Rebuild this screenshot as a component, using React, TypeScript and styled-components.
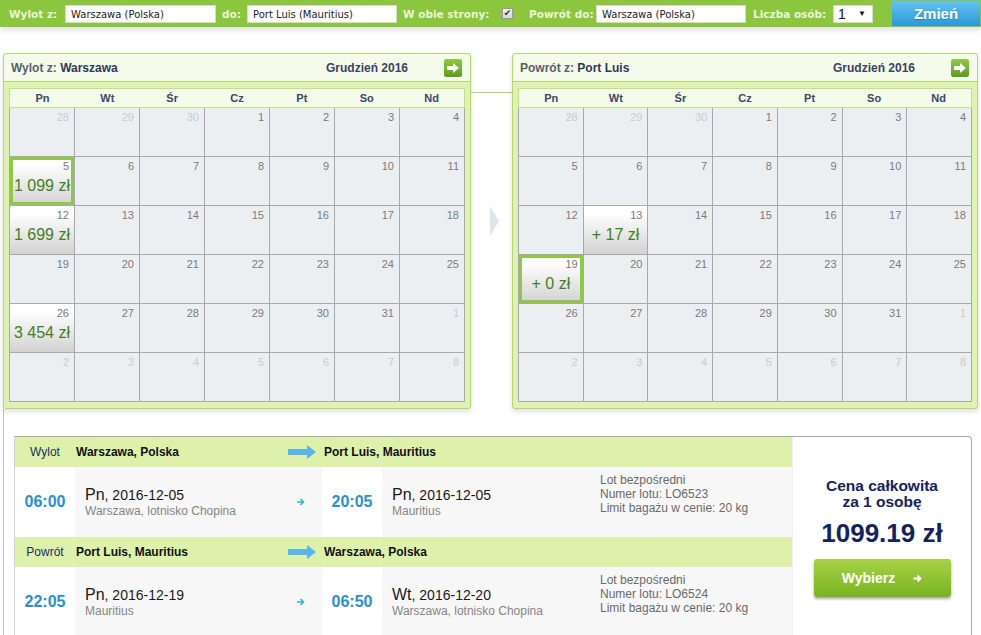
import * as React from 'react';
import styled, { createGlobalStyle } from 'styled-components';

const GlobalStyle = createGlobalStyle`
    body {
        margin: 0;
        background: #fff;
        font-family: "Liberation Sans", Arial, sans-serif;
    }
`;

const Page = styled.div`
    width: 981px;
    height: 635px;
    overflow: hidden;
`;

/* ---------- search bar ---------- */

const TopBar = styled.div`
    position: relative;
    z-index: 1;
    height: 27px;
    display: flex;
    align-items: center;
    background: #8cc63f;
    box-shadow: 0 3px 6px rgba(0, 0, 0, 0.13);
    font-family: "DejaVu Sans", Verdana, sans-serif;
`;

const BarLabel = styled.span<{ $w: number; $pl: number }>`
    box-sizing: border-box;
    width: ${p => p.$w}px;
    padding-left: ${p => p.$pl}px;
    color: #e9f5d6;
    font-weight: bold;
    font-size: 10.5px;
    white-space: nowrap;
`;

const BarInput = styled.div<{ $w: number }>`
    box-sizing: border-box;
    width: ${p => p.$w}px;
    height: 18px;
    padding-left: 5px;
    line-height: 17px;
    background: #fff;
    border: 1px solid #d5dccb;
    color: #222;
    font-size: 10px;
    white-space: nowrap;
`;

const Check = styled.span`
    box-sizing: border-box;
    width: 11px;
    height: 11px;
    border: 1px solid #9a9a9a;
    background: linear-gradient(#f4f4f4, #d6d6d6);
    display: flex;
    align-items: center;
    justify-content: center;
    color: #333;
    font-size: 9px;
    line-height: 9px;
`;

const Select = styled.div`
    box-sizing: border-box;
    width: 40px;
    height: 18px;
    padding: 0 6px 0 4px;
    display: flex;
    align-items: center;
    justify-content: space-between;
    background: #fff;
    border: 1px solid #d5dccb;
    font-family: "Liberation Sans", Arial, sans-serif;
    font-size: 14px;
    color: #111;
    span {
        font-size: 8px;
    }
`;

const ChangeButton = styled.div`
    margin-left: 19px;
    width: 88px;
    height: 25px;
    align-self: flex-start;
    margin-top: 1px;
    display: flex;
    align-items: center;
    justify-content: center;
    background: linear-gradient(#62c3f1, #2a98d5);
    color: #fff;
    font-family: "Liberation Sans", Arial, sans-serif;
    font-weight: bold;
    font-size: 15px;
    text-shadow: 0 1px 1px rgba(0, 0, 0, 0.2);
`;

/* ---------- calendars ---------- */

const CalendarRow = styled.div`
    display: flex;
    margin: 26px 0 0 3px;
`;

const CalPanel = styled.div<{ $w: number }>`
    box-sizing: border-box;
    width: ${p => p.$w}px;
    border: 1px solid #b5d770;
    border-radius: 3px;
    background: #dff2b3;
    box-shadow: 0 3px 5px rgba(0, 0, 0, 0.12);
`;

const CalHeader = styled.div`
    height: 27px;
    display: flex;
    align-items: center;
    padding: 0 8px 0 7px;
    background: #f5fbea;
    border-bottom: 1px solid #b5d770;
    border-radius: 3px 3px 0 0;
    font-size: 12px;
    font-weight: bold;
    color: #2f3856;
`;

const CalTitle = styled.div`
    flex: 1;
    span {
        color: #5a5f66;
    }
`;

const MonthTitle = styled.div`
    color: #39435f;
    margin-right: 36px;
`;

const NextButton = styled.div`
    width: 18px;
    height: 18px;
    border-radius: 2px;
    background: linear-gradient(#8fca45, #5f9b22);
    display: flex;
    align-items: center;
    justify-content: center;
`;

const CalBody = styled.div`
    padding: 6px 5px 6px 5px;
`;

const WeekHead = styled.div`
    display: grid;
    grid-template-columns: repeat(7, 1fr);
    height: 18px;
    border: 1px solid #c2e087;
    background: #f5fbe9;
    font-size: 11px;
    font-weight: bold;
    line-height: 18px;
    text-align: center;
    color: #3a4767;
`;

const DayGrid = styled.div`
    display: grid;
    grid-template-columns: repeat(7, 1fr);
    border-left: 1px solid #a9a9a9;
`;

const Cell = styled.div<{ $priced?: boolean; $selected?: boolean }>`
    height: 48px;
    border-right: 1px solid #a9a9a9;
    border-bottom: 1px solid #a9a9a9;
    background: ${p => (p.$priced ? 'linear-gradient(#ffffff 15%, #d2d2d2)' : '#eceff1')};
    box-shadow: ${p => (p.$selected ? 'inset 0 0 0 3px #91c746' : 'none')};
`;

const DayNum = styled.div<{ $other?: boolean }>`
    padding: 3px 5px 0 0;
    text-align: right;
    font-size: 11px;
    line-height: 13px;
    color: ${p => (p.$other ? '#c9cbcd' : '#7b7b7b')};
`;

const Price = styled.div`
    margin-top: 4px;
    text-align: center;
    font-size: 16px;
    line-height: 18px;
    color: #437f1e;
    white-space: nowrap;
`;

const Between = styled.div`
    width: 41px;
    padding-top: 39px;
`;

const Connector = styled.div`
    height: 1px;
    background: #b2d56d;
`;

const Chevron = styled.div`
    margin: 113px 0 0 19px;
`;

/* ---------- flight summary ---------- */

const FlightWrap = styled.div`
    margin-left: 3px;
    padding: 27px 0 0 10px;
    border-left: 1px solid #b3d370;
`;

const FlightPanel = styled.div`
    display: flex;
    width: 956px;
    height: 220px;
    border: 1px solid #a8a8a8;
    border-left-color: #d0d0d0;
    border-bottom: none;
    border-top-right-radius: 4px;
`;

const Legs = styled.div`
    width: 777px;
`;

const LegHead = styled.div`
    height: 30px;
    display: flex;
    align-items: center;
    background: #ddf1aa;
    font-size: 12px;
`;

const LegLabel = styled.div`
    width: 60px;
    text-align: center;
    color: #1d2b5a;
`;

const City = styled.div<{ $w?: number }>`
    width: ${p => (p.$w ? `${p.$w}px` : 'auto')};
    padding-left: 1px;
    font-weight: bold;
    color: #111;
`;

const BigArrow = styled.svg`
    margin-right: 7px;
`;

const LegDetail = styled.div`
    height: 70px;
    display: flex;
`;

const Time = styled.div`
    width: 60px;
    display: flex;
    align-items: center;
    justify-content: center;
    background: #fff;
    font-size: 16px;
    font-weight: bold;
    color: #2a8fd3;
`;

const Info = styled.div<{ $w?: number }>`
    box-sizing: border-box;
    width: ${p => (p.$w ? `${p.$w}px` : 'auto')};
    flex: ${p => (p.$w ? 'none' : '1')};
    padding-left: 10px;
    display: flex;
    align-items: center;
    background: #f7f7f7;
`;

const DateBlock = styled.div<{ $w?: number }>`
    width: ${p => (p.$w ? `${p.$w}px` : 'auto')};
    flex: ${p => (p.$w ? 'none' : '1')};
`;

const DateLine = styled.div`
    font-size: 14px;
    line-height: 17px;
    color: #1a1a1a;
    b {
        font-weight: normal;
        font-size: 16px;
    }
`;

const Place = styled.div`
    font-size: 12px;
    line-height: 15px;
    color: #858585;
`;

const SmallArrow = styled.svg`
    margin-right: 17px;
`;

const Meta = styled.div`
    align-self: flex-start;
    padding-top: 6px;
    font-size: 12px;
    line-height: 14px;
    color: #6a6a6a;
`;

const PriceBox = styled.div`
    flex: 1;
    display: flex;
    flex-direction: column;
    align-items: center;
    border-left: 1px solid #f0f0f0;
    color: #14235f;
    font-weight: bold;
`;

const PriceTitle = styled.div`
    margin-top: 41px;
    font-size: 15.5px;
    line-height: 16px;
    text-align: center;
`;

const Total = styled.div`
    margin-top: 8px;
    font-size: 26px;
    line-height: 30px;
`;

const ChooseButton = styled.div`
    margin-top: 11px;
    width: 137px;
    height: 38px;
    display: flex;
    align-items: center;
    justify-content: center;
    gap: 18px;
    border-radius: 3px;
    background: linear-gradient(#a7d245, #79b322);
    box-shadow: 0 2px 3px rgba(0, 0, 0, 0.35);
    color: #fff;
    font-size: 14px;
`;

type Day = { n: number; other?: boolean; price?: string; selected?: boolean };

function buildMonth(extra: Record<number, { price: string; selected?: boolean }>): Day[] {
    const days: Day[] = [28, 29, 30].map(n => ({ n, other: true }));
    for (let n = 1; n <= 31; n++) days.push({ n, ...extra[n] });
    for (let n = 1; n <= 8; n++) days.push({ n, other: true });
    return days;
}

const weekDays = ['Pn', 'Wt', 'Śr', 'Cz', 'Pt', 'So', 'Nd'];

const outbound = buildMonth({
    5: { price: '1 099 zł', selected: true },
    12: { price: '1 699 zł' },
    26: { price: '3 454 zł' },
});
const inbound = buildMonth({
    13: { price: '+ 17 zł' },
    19: { price: '+ 0 zł', selected: true },
});

const Calendar = ({ label, city, days, width }: { label: string; city: string; days: Day[]; width: number }) => (
    <CalPanel $w={width}>
        <CalHeader>
            <CalTitle><span>{label}</span> {city}</CalTitle>
            <MonthTitle>Grudzień 2016</MonthTitle>
            <NextButton>
                <svg width="12" height="10" viewBox="0 0 12 10">
                    <polygon points="0,3 6,3 6,0 12,5 6,10 6,7 0,7" fill="#fff" />
                </svg>
            </NextButton>
        </CalHeader>
        <CalBody>
            <WeekHead>
                {weekDays.map(d => <div key={d}>{d}</div>)}
            </WeekHead>
            <DayGrid>
                {days.map((d, i) => (
                    <Cell key={i} $priced={!!d.price} $selected={d.selected}>
                        <DayNum $other={d.other}>{d.n}</DayNum>
                        {d.price && <Price>{d.price}</Price>}
                    </Cell>
                ))}
            </DayGrid>
        </CalBody>
    </CalPanel>
);

const HeadArrow = () => (
    <BigArrow width="28" height="14" viewBox="0 0 28 14">
        <polygon points="0,4 19,4 19,0 28,7 19,14 19,10 0,10" fill="#5ab5e8" />
    </BigArrow>
);

const DetailArrow = () => (
    <SmallArrow width="8" height="8" viewBox="0 0 8 8">
        <path d="M0 4 H6.5 M3.5 1 L6.5 4 L3.5 7" stroke="#3fade5" strokeWidth="1.6" fill="none" />
    </SmallArrow>
);

type Leg = {
    label: string;
    from: string;
    to: string;
    depTime: string;
    depDay: string;
    depDate: string;
    depPlace: string;
    arrTime: string;
    arrDay: string;
    arrDate: string;
    arrPlace: string;
    flight: string;
};

const legs: Leg[] = [
    {
        label: 'Wylot', from: 'Warszawa, Polska', to: 'Port Luis, Mauritius',
        depTime: '06:00', depDay: 'Pn', depDate: '2016-12-05', depPlace: 'Warszawa, lotnisko Chopina',
        arrTime: '20:05', arrDay: 'Pn', arrDate: '2016-12-05', arrPlace: 'Mauritius',
        flight: 'LO6523',
    },
    {
        label: 'Powrót', from: 'Port Luis, Mauritius', to: 'Warszawa, Polska',
        depTime: '22:05', depDay: 'Pn', depDate: '2016-12-19', depPlace: 'Mauritius',
        arrTime: '06:50', arrDay: 'Wt', arrDate: '2016-12-20', arrPlace: 'Warszawa, lotnisko Chopina',
        flight: 'LO6524',
    },
];

export default function App() {
    return (
        <Page>
            <GlobalStyle />
            <TopBar>
                <BarLabel $w={65} $pl={9}>Wylot z:</BarLabel>
                <BarInput $w={151}>Warszawa (Polska)</BarInput>
                <BarLabel $w={31} $pl={6}>do:</BarLabel>
                <BarInput $w={150}>Port Luis (Mauritius)</BarInput>
                <BarLabel $w={105} $pl={6}>W obie strony:</BarLabel>
                <Check>✔</Check>
                <BarLabel $w={83} $pl={16}>Powrót do:</BarLabel>
                <BarInput $w={150}>Warszawa (Polska)</BarInput>
                <BarLabel $w={87} $pl={7}>Liczba osób:</BarLabel>
                <Select>1<span>▼</span></Select>
                <ChangeButton>Zmień</ChangeButton>
            </TopBar>

            <CalendarRow>
                <Calendar label="Wylot z:" city="Warszawa" days={outbound} width={468} />
                <Between>
                    <Connector />
                    <Chevron>
                        <svg width="9" height="30" viewBox="0 0 9 30">
                            <polygon points="0,0 9,15 0,30" fill="#dfe4e9" />
                        </svg>
                    </Chevron>
                </Between>
                <Calendar label="Powrót z:" city="Port Luis" days={inbound} width={466} />
            </CalendarRow>

            <FlightWrap>
                <FlightPanel>
                    <Legs>
                        {legs.map(l => (
                            <React.Fragment key={l.label}>
                                <LegHead>
                                    <LegLabel>{l.label}</LegLabel>
                                    <City $w={212}>{l.from}</City>
                                    <HeadArrow />
                                    <City>{l.to}</City>
                                </LegHead>
                                <LegDetail>
                                    <Time>{l.depTime}</Time>
                                    <Info $w={247}>
                                        <DateBlock>
                                            <DateLine><b>{l.depDay}</b>, {l.depDate}</DateLine>
                                            <Place>{l.depPlace}</Place>
                                        </DateBlock>
                                        <DetailArrow />
                                    </Info>
                                    <Time>{l.arrTime}</Time>
                                    <Info>
                                        <DateBlock $w={208}>
                                            <DateLine><b>{l.arrDay}</b>, {l.arrDate}</DateLine>
                                            <Place>{l.arrPlace}</Place>
                                        </DateBlock>
                                        <Meta>
                                            Lot bezpośredni<br />
                                            Numer lotu: {l.flight}<br />
                                            Limit bagażu w cenie: 20 kg
                                        </Meta>
                                    </Info>
                                </LegDetail>
                            </React.Fragment>
                        ))}
                    </Legs>
                    <PriceBox>
                        <PriceTitle>Cena całkowita<br />za 1 osobę</PriceTitle>
                        <Total>1099.19 zł</Total>
                        <ChooseButton>
                            Wybierz
                            <svg width="9" height="9" viewBox="0 0 9 9">
                                <path d="M0.5 4.5 H7.5 M4.5 1.5 L7.5 4.5 L4.5 7.5" stroke="#fff" strokeWidth="1.8" fill="none" />
                            </svg>
                        </ChooseButton>
                    </PriceBox>
                </FlightPanel>
            </FlightWrap>
        </Page>
    );
}
